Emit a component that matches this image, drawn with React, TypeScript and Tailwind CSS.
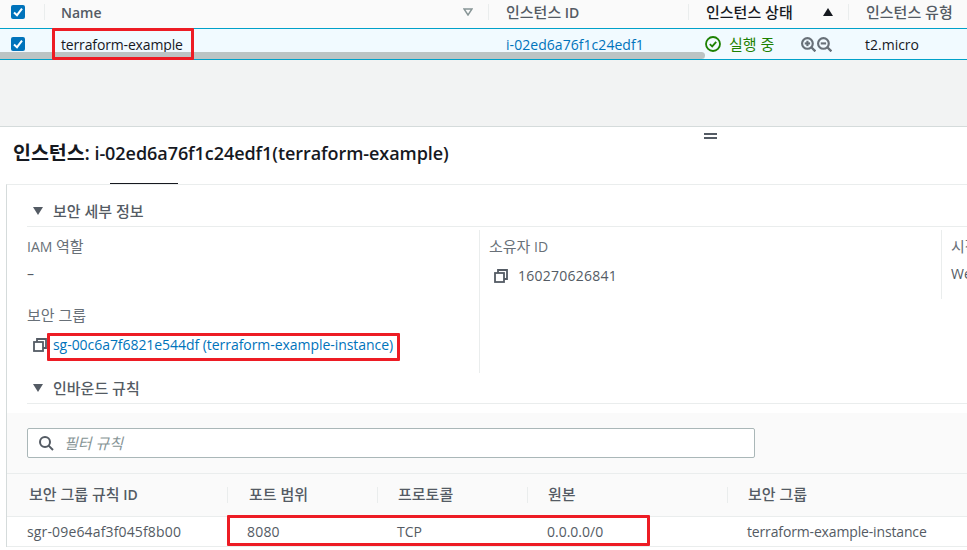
const font = { fontFamily: '"Open Sans", "Noto Sans CJK KR", sans-serif' };

// hangul runs a touch bigger than the latin next to them
const K = ({ children }: { children: React.ReactNode }) => <span className="text-[15px]">{children}</span>;

const Check = () => (
  <div className="flex h-[14px] w-[14px] items-center justify-center rounded-[2px] bg-[#0073bb]">
    <svg viewBox="0 0 14 14" className="h-[14px] w-[14px]" fill="none" stroke="#fff" strokeWidth="2">
      <path d="M3 7.5 L6 10.2 L11 3.6" />
    </svg>
  </div>
);

const CopyIcon = () => (
  <svg viewBox="0 0 14 14" className="h-[14px] w-[14px] shrink-0" fill="none" stroke="#545b64" strokeWidth="1.8">
    <rect x="1" y="4" width="9" height="9" />
    <path d="M4 4 V1 H13 V10 H10" />
  </svg>
);

const Caret = () => (
  <svg viewBox="0 0 10 8" className="h-[8px] w-[10px]" fill="#545b64">
    <path d="M0 0 H10 L5 8 Z" />
  </svg>
);

const Zoom = ({ plus }: { plus?: boolean }) => (
  <svg viewBox="0 0 14 14" className="h-[15px] w-[15px]" fill="none" stroke="#687078" strokeWidth="2">
    <circle cx="6" cy="6" r="5" />
    <path d="M9.6 9.6 L13.4 13.4" strokeWidth="2.2" />
    <path d="M3.5 6 H8.5" />
    {plus && <path d="M6 3.5 V8.5" />}
  </svg>
);

const Sep = () => <div className="h-[16px] w-px bg-[#eaeded]" />;

export default function App() {
  return (
    <div className="relative h-[550px] w-[967px] overflow-hidden bg-white text-[14px] text-[#16191f]" style={font}>
      {/* instance table */}
      <div className="flex h-[28px] items-center bg-[#fafafa] pb-[4px] font-medium text-[#545b64]">
        <div className="flex w-[44px] justify-end pr-[19px]"><Check /></div>
        <Sep />
        <div className="flex w-[443px] items-center justify-between pl-[16px] pr-[15px]">
          <span className="font-semibold">Name</span>
          <svg viewBox="0 0 10 8" className="h-[8px] w-[10px]" fill="none" stroke="#879596" strokeWidth="1.5">
            <path d="M1 1 H9 L5 7 Z" />
          </svg>
        </div>
        <Sep />
        <div className="w-[199px] pl-[17px]"><K>인스턴스</K> <span className="font-semibold">ID</span></div>
        <Sep />
        <div className="flex w-[159px] items-center justify-between pl-[17px] pr-[15px] text-[#16191f]">
          <K>인스턴스 상태</K>
          <svg viewBox="0 0 10 8" className="h-[8px] w-[10px]" fill="#16191f"><path d="M0 8 H10 L5 0 Z" /></svg>
        </div>
        <Sep />
        <div className="pl-[17px]"><K>인스턴스 유형</K></div>
      </div>
      <div className="relative flex h-[32px] items-center border-y border-[#00a1c9] bg-[#f1faff]">
        <div className="flex w-[45px] justify-end pr-[20px]"><Check /></div>
        <div className="w-[444px] pl-[16px] tracking-[-0.15px]">terraform-example</div>
        <div className="w-[201px] pl-[17px] tracking-[0.05px] text-[#0073bb]">i-02ed6a76f1c24edf1</div>
        <div className="flex w-[159px] items-center pl-[15px]">
          <svg viewBox="0 0 16 16" className="h-[16px] w-[16px]" fill="none" stroke="#1d8102" strokeWidth="1.8">
            <circle cx="8" cy="8" r="7" />
            <path d="M4.8 8.2 L7.2 10.4 L11.2 5.8" />
          </svg>
          <span className="ml-[8px] text-[#1d8102]"><K>실행 중</K></span>
          <div className="ml-[27px] flex gap-px"><Zoom plus /><Zoom /></div>
        </div>
        <div className="pl-[16px]">t2.micro</div>
        <div className="absolute bottom-0 left-0 h-[7px] w-[705px] rounded-r-[4px] bg-[#bcc4c4]" />
      </div>
      <div className="h-[67px] border-b border-[#d5dbdb] bg-[#f2f3f3]" />

      {/* split panel */}
      <div className="relative flex h-[57px] items-start pl-[13px] pt-[13px] text-[18px] font-semibold leading-[26px]">
        <div className="tracking-[-0.06px]"><span className="text-[19.5px]">인스턴스:</span> i-02ed6a76f1c24edf1(terraform-example)</div>
        <div className="absolute left-[704px] top-[6px] h-[6px] w-[13px] border-y-2 border-[#545b64]" />
        <div className="absolute left-[110px] top-[56px] h-px w-[68px] bg-[#16191f]" />
      </div>
      <div className="ml-[6px] border-l border-t border-[#d5dbdb] border-t-[#eaeded]">
        <div className="pl-[20px]">
          <div className="flex h-[42px] items-center gap-[10px] border-b border-[#eaeded] pl-[6px] pt-[11px] text-[#545b64]">
            <Caret /><span className="font-medium"><K>보안 세부 정보</K></span>
          </div>
          <div className="flex h-[146px] pt-[3px]">
            <div className="h-[143px] w-[453px] shrink-0 border-r border-[#eaeded] pt-[7px]">
              <div className="leading-[18px] text-[#687078]">IAM <K>역할</K></div>
              <div className="mt-[9px] leading-[18px] text-[#545b64]">–</div>
              <div className="mt-[23px] leading-[18px] text-[#687078]"><K>보안 그룹</K></div>
              <div className="mt-[11px] flex items-center gap-[6px] whitespace-nowrap pl-[6px] leading-[18px]">
                <CopyIcon />
                <span className="tracking-[-0.05px] text-[#0073bb]">sg-00c6a7f6821e544df (terraform-example-instance)</span>
              </div>
            </div>
            <div className="h-[69px] w-[462px] shrink-0 border-r border-[#eaeded] pl-[9px] pt-[7px]">
              <div className="leading-[18px] text-[#687078]"><K>소유자</K> ID</div>
              <div className="mt-[11px] flex items-center gap-[10px] pl-[5px] leading-[18px] tracking-[0.25px] text-[#545b64]">
                <CopyIcon />160270626841
              </div>
            </div>
            <div className="w-[40px] shrink-0 whitespace-nowrap pl-[9px] pt-[7px]">
              <div className="leading-[18px] text-[#687078]"><K>시작</K></div>
              <div className="mt-[9px] leading-[18px] text-[#545b64]">Wed</div>
            </div>
          </div>
          <div className="flex h-[31px] items-center gap-[10px] border-b border-[#eaeded] pl-[6px] text-[#545b64]">
            <Caret /><span className="font-medium"><K>인바운드 규칙</K></span>
          </div>
        </div>

        {/* rules table */}
        <div className="mt-[9px] h-[61px] border-b border-[#eaeded] bg-[#fafafa] px-[20px] pt-[15px]">
          <div className="flex h-[30px] w-[728px] items-center gap-[10px] rounded-[2px] border border-[#aab7b8] bg-white pl-[10px] text-[#879596]">
            <svg viewBox="0 0 16 16" className="h-[16px] w-[16px]" fill="none" stroke="#545b64" strokeWidth="2">
              <circle cx="7" cy="7" r="5" />
              <path d="M10.6 10.6 L15 15" />
            </svg>
            <span className="italic"><K>필터 규칙</K></span>
          </div>
        </div>
        <div className="flex h-[43px] items-center border-b border-[#eaeded] bg-[#fafafa] pb-[1px] font-medium text-[#545b64]">
          <div className="w-[220px] pl-[22px]"><K>보안 그룹 규칙</K> <span className="font-semibold">ID</span></div>
          <Sep />
          <div className="w-[149px] pl-[21px]"><K>포트 범위</K></div>
          <Sep />
          <div className="w-[149px] pl-[20px]"><K>프로토콜</K></div>
          <Sep />
          <div className="w-[199px] pl-[20px]"><K>원본</K></div>
          <Sep />
          <div className="pl-[20px]"><K>보안 그룹</K></div>
        </div>
        <div className="flex h-[30px] items-center border-b border-[#eaeded] text-[#545b64]">
          <div className="w-[221px] pl-[20px] tracking-[0.15px]">sgr-09e64af3f045f8b00</div>
          <div className="w-[150px] pl-[19px] tracking-[0.2px]">8080</div>
          <div className="w-[150px] pl-[19px]">TCP</div>
          <div className="w-[200px] pl-[19px]">0.0.0.0/0</div>
          <div className="pl-[19px] tracking-[-0.15px]">terraform-example-instance</div>
        </div>
      </div>

      {/* red annotations */}
      <div className="absolute left-[52px] top-[28px] h-[32px] w-[142px] rounded-[1px] border-[3px] border-[#ed1c24]" />
      <div className="absolute left-[47px] top-[333px] h-[28px] w-[353px] rounded-[1px] border-[3px] border-[#ed1c24]" />
      <div className="absolute left-[227px] top-[515px] h-[31px] w-[423px] rounded-[1px] border-[3px] border-[#ed1c24]" />
    </div>
  );
}
